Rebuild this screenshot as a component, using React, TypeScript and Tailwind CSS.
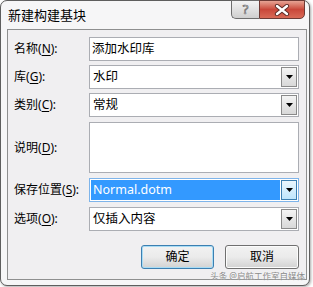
import React from "react";

const Arrow: React.FC = () => (
  <svg width="7" height="4" viewBox="0 0 7 4">
    <path d="M0 0 H7 L3.5 4 Z" fill="#000" />
  </svg>
);

const Label: React.FC<{ text: string; k: string }> = ({ text, k }) => (
  <div className="w-[81px] shrink-0 pl-[6px] text-[12px] text-black">
    {text}(<u className="underline-offset-2">{k}</u>):
  </div>
);

const Select: React.FC<{ value: string; active?: boolean }> = ({ value, active }) => (
  <div
    className={
      active
        ? "flex-1 h-full flex border border-[#7eb4ea] bg-white"
        : "flex-1 h-full flex border border-[#abadb3] bg-white"
    }
  >
    <div className="flex-1 flex items-center p-[1px]">
      {active ? (
        <div className="w-full h-full bg-[#3399ff] text-white flex items-center pl-[2px] text-[12.5px]">
          {value}
        </div>
      ) : (
        <div className="pl-[2px] text-[12.5px] text-black">{value}</div>
      )}
    </div>
    <div
      className={
        active
          ? "w-[16px] my-[1px] mr-[1px] flex items-center justify-center border border-[#3c7fb1] bg-gradient-to-b from-[#eaf6fd] to-[#bee6fd]"
          : "w-[16px] my-[1px] mr-[1px] flex items-center justify-center border border-[#8a8a8a] bg-gradient-to-b from-[#f4f4f4] to-[#d8d8d8]"
      }
    >
      <Arrow />
    </div>
  </div>
);

const App: React.FC = () => {
  return (
    <div className="w-[313px] h-[287px] bg-white relative overflow-hidden font-['Noto_Sans','Noto_Sans_CJK_SC',sans-serif]">
      {/* Window frame */}
      <div className="w-[310px] h-[286px] bg-[#f6f6f7] border border-[#5e5e5e] rounded-[7px] flex flex-col pl-[6px] pr-[2px] pb-[5px] shadow-[1px_1px_3px_rgba(0,0,0,0.35)]">
        {/* Title bar */}
        <div className="h-[28px] shrink-0 flex items-start justify-between">
          <span className="mt-[6px] ml-[1px] text-[13px] text-black leading-[16px]">新建构建基块</span>
          <div className="flex mr-[2px] -mt-[1px]">
            <div className="w-[28px] h-[19px] border border-[#6d6d6d] border-r-0 rounded-bl-[5px] bg-gradient-to-b from-[#f3f3f3] to-[#cfcfcf] flex items-center justify-center">
              <span className="text-[13px] leading-none text-white [-webkit-text-stroke:0.7px_#666]">?</span>
            </div>
            <div className="w-[46px] h-[19px] border border-[#6d3a35] rounded-br-[5px] bg-gradient-to-b from-[#e6a394] via-[#c9473a] to-[#d86a57] flex items-center justify-center">
              <svg width="16" height="12" viewBox="0 0 16 12">
                <path d="M3 2 L13 10 M13 2 L3 10" stroke="#5a2a25" strokeWidth="4.2" strokeLinecap="round" />
                <path d="M3 2 L13 10 M13 2 L3 10" stroke="#fff" strokeWidth="2.4" strokeLinecap="round" />
              </svg>
            </div>
          </div>
        </div>

        {/* Client area */}
        <div className="flex-1 border border-[#8e8f8f] bg-[#f0eff1] flex flex-col pr-[7px]">
          <div className="mt-[7px] h-[24px] flex items-center">
            <Label text="名称" k="N" />
            <div className="flex-1 h-full border border-[#abadb3] bg-white flex items-center pl-[2px] text-[12.5px] text-black">
              添加水印库
            </div>
          </div>

          <div className="mt-[4px] h-[24px] flex items-center">
            <Label text="库" k="G" />
            <Select value="水印" />
          </div>

          <div className="mt-[4px] h-[24px] flex items-center">
            <Label text="类别" k="C" />
            <Select value="常规" />
          </div>

          <div className="mt-[5px] h-[51px] flex items-center">
            <Label text="说明" k="D" />
            <div className="flex-1 h-full border border-[#abadb3] bg-white" />
          </div>

          <div className="mt-[5px] h-[24px] flex items-center">
            <Label text="保存位置" k="S" />
            <Select value="Normal.dotm" active />
          </div>

          <div className="mt-[5px] h-[24px] flex items-center">
            <Label text="选项" k="O" />
            <Select value="仅插入内容" />
          </div>

          <div className="mt-[14px] h-[24px] flex justify-end gap-[11px]">
            <button className="w-[73px] h-full rounded-[3px] border border-[#3c7fb1] bg-gradient-to-b from-[#f2f2f2] via-[#ebebeb] to-[#d2d2d2] shadow-[inset_0_0_0_1px_#a8dcf5] text-[12px] text-black">
              确定
            </button>
            <button className="w-[74px] h-full rounded-[3px] border border-[#707070] bg-gradient-to-b from-[#f2f2f2] via-[#ebebeb] to-[#d2d2d2] shadow-[inset_0_0_0_1px_#fcfcfc] text-[12px] text-black">
              取消
            </button>
          </div>
        </div>
      </div>

      {/* Watermark */}
      <div className="absolute right-[8px] bottom-[6px] text-[8.5px] leading-[10px] text-[#8a8a8a] [text-shadow:0_0_2px_#fff]">
        头条 @启航工作室自媒体
      </div>
    </div>
  );
};

export default App;
